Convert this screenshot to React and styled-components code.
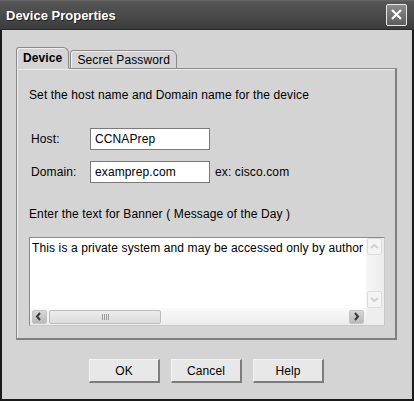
import React from 'react'
import styled, { createGlobalStyle } from 'styled-components'

const GlobalStyle = createGlobalStyle`
  html, body {
    margin: 0;
    padding: 0;
    background: #d4d4d4;
  }
  body {
    font-family: 'Liberation Sans', Arial, sans-serif;
    font-size: 12px;
    letter-spacing: 0.12px;
    color: #000;
  }
`

const Window = styled.div`
  width: 414px;
  height: 401px;
  box-sizing: border-box;
  display: flex;
  flex-direction: column;
  background: #d4d4d4;
  border-left: 2px solid #1a1a1a;
  border-right: 2px solid #1a1a1a;
  border-bottom: 2px solid #1a1a1a;
`

const TitleBar = styled.div`
  height: 29px;
  margin: 0 -2px;
  display: flex;
  align-items: center;
  justify-content: space-between;
  padding: 0 6px 0 6px;
  background: linear-gradient(to bottom, #6a6a6a 0, #555 2px, #4a4a4a 50%, #3c3c3c 100%);
  border-bottom: 1px solid #2a2a2a;
`

const Title = styled.div`
  color: #fff;
  font-weight: 700;
  font-size: 13px;
  letter-spacing: 0;
  text-shadow: 1px 1px 0 #222;
  padding-top: 1px;
`

const CloseButton = styled.div`
  width: 19px;
  height: 20px;
  margin-right: 1px;
  border: 1px solid #e8e8e8;
  border-radius: 2px;
  background: linear-gradient(to bottom, #8a8a8a, #5e5e5e);
  display: flex;
  align-items: center;
  justify-content: center;
`

const Content = styled.div`
  flex: 1;
  display: flex;
  flex-direction: column;
  padding: 17px 15px 0 14px;
`

const TabRow = styled.div`
  display: flex;
  align-items: flex-end;
  height: 22px;
  position: relative;
  z-index: 1;
  margin-bottom: -1px;
`

const Tab = styled.div`
  box-sizing: border-box;
  height: ${(p) => (p.$active ? '22px' : '19px')};
  padding: 0 ${(p) => (p.$active ? '6px' : '6px')};
  display: flex;
  align-items: center;
  font-weight: ${(p) => (p.$active ? 700 : 400)};
  background: #d4d4d4;
  border: 1px solid #8a8a8a;
  border-bottom: ${(p) => (p.$active ? '1px solid #d4d4d4' : '1px solid #8a8a8a')};
  border-top-left-radius: 3px;
  border-top-right-radius: 6px;
  box-shadow: inset 1px 1px 0 #efefef;
  margin-right: 1px;
`

const Panel = styled.div`
  box-sizing: border-box;
  height: 272px;
  border: 1px solid #8a8a8a;
  border-right: 2px solid #808080;
  border-bottom: 2px solid #808080;
  box-shadow: inset 1px 1px 0 #ececec;
  padding: 19px 11px 0 12px;
  display: flex;
  flex-direction: column;
`

const Intro = styled.div`
  height: 14px;
  line-height: 14px;
  margin-bottom: 26px;
`

const FieldRow = styled.div`
  display: flex;
  align-items: center;
  height: 22px;
  margin-bottom: 11px;
`

const Label = styled.div`
  width: 59px;
  padding-left: 2px;
`

const Input = styled.div`
  box-sizing: border-box;
  width: 120px;
  height: 22px;
  background: #fff;
  border: 1px solid #7a7a7a;
  padding: 0 4px;
  display: flex;
  align-items: center;
`

const Hint = styled.div`
  margin-left: 5px;
`

const BannerLabel = styled.div`
  height: 14px;
  line-height: 14px;
  margin-top: 13px;
  margin-bottom: 16px;
`

const TextBox = styled.div`
  box-sizing: border-box;
  width: 356px;
  height: 89px;
  background: #fff;
  border: 1px solid #8a8a8a;
  border-right-color: #c8c8c8;
  border-bottom-color: #c8c8c8;
  display: grid;
  grid-template-columns: 1fr 18px;
  grid-template-rows: 1fr 17px;
  overflow: hidden;
`

const TextArea = styled.div`
  padding: 3px 2px 0 2px;
  white-space: nowrap;
  overflow: hidden;
`

const VScroll = styled.div`
  display: flex;
  flex-direction: column;
  justify-content: space-between;
  background: linear-gradient(to right, #f6f6f6, #ececec);
  padding: 0 2px 0 1px;
`

const HScroll = styled.div`
  display: flex;
  align-items: center;
  background: linear-gradient(to bottom, #fafafa, #ececec);
  padding: 0 2px 0 2px;
  gap: 2px;
`

const Corner = styled.div`
  background: #eeeeee;
`

const ScrollButton = styled.div`
  box-sizing: border-box;
  width: 15px;
  height: ${(p) => (p.$tall ? '17px' : '14px')};
  border: 1px solid ${(p) => (p.$disabled ? '#dcdcdc' : '#c4c4c4')};
  border-radius: 2px;
  background: ${(p) => (p.$disabled ? '#f4f4f4' : 'linear-gradient(to bottom, #d6d6d6, #b8b8b8)')};
  display: flex;
  align-items: center;
  justify-content: center;
`

const Track = styled.div`
  flex: 1;
  height: 14px;
  display: flex;
  align-items: center;
`

const Thumb = styled.div`
  box-sizing: border-box;
  width: 112px;
  height: 14px;
  border: 1px solid #bdbdbd;
  border-radius: 2px;
  background: linear-gradient(to bottom, #ececec, #dcdcdc);
  display: flex;
  align-items: center;
  justify-content: center;
  gap: 1px;
`

const Grip = styled.span`
  width: 1px;
  height: 6px;
  background: #9a9a9a;
`

const ButtonRow = styled.div`
  display: flex;
  justify-content: center;
  gap: 11px;
  margin-top: 19px;
`

const Button = styled.div`
  box-sizing: border-box;
  width: 71px;
  height: 24px;
  display: flex;
  align-items: center;
  justify-content: center;
  background: #e8e8e8;
  border: 1px solid #f4f4f4;
  border-right: 2px solid #7c7c7c;
  border-bottom: 2px solid #7c7c7c;
  font-size: 12px;
`

const Chevron = ({ dir, color }) => {
  const pts = {
    left: '6,2 3,5.5 6,9',
    right: '4,2 7,5.5 4,9',
    up: '2,7 5.5,4 9,7',
    down: '2,4 5.5,7 9,4',
  }[dir]
  return (
    <svg width='11' height='11' viewBox='0 0 11 11'>
      <polyline points={pts} fill='none' stroke={color} strokeWidth='2' />
    </svg>
  )
}

export default function App() {
  return (
    <>
      <GlobalStyle />
      <Window>
        <TitleBar>
          <Title>Device Properties</Title>
          <CloseButton>
            <svg width='13' height='13' viewBox='0 0 13 13'>
              <path d='M2 2 L11 11 M11 2 L2 11' stroke='#fff' strokeWidth='2.2' />
            </svg>
          </CloseButton>
        </TitleBar>
        <Content>
          <TabRow>
            <Tab $active>Device</Tab>
            <Tab>Secret Password</Tab>
          </TabRow>
          <Panel>
            <Intro>Set the host name and Domain name for the device</Intro>
            <FieldRow>
              <Label>Host:</Label>
              <Input>CCNAPrep</Input>
            </FieldRow>
            <FieldRow>
              <Label>Domain:</Label>
              <Input>examprep.com</Input>
              <Hint>ex: cisco.com</Hint>
            </FieldRow>
            <BannerLabel>Enter the text for Banner ( Message of the Day )</BannerLabel>
            <TextBox>
              <TextArea>This is a private system and may be accessed only by author</TextArea>
              <VScroll>
                <ScrollButton $disabled $tall>
                  <Chevron dir='up' color='#cfcfcf' />
                </ScrollButton>
                <ScrollButton $disabled $tall>
                  <Chevron dir='down' color='#cfcfcf' />
                </ScrollButton>
              </VScroll>
              <HScroll>
                <ScrollButton>
                  <Chevron dir='left' color='#3a3a3a' />
                </ScrollButton>
                <Track>
                  <Thumb>
                    <Grip />
                    <Grip />
                    <Grip />
                    <Grip />
                  </Thumb>
                </Track>
                <ScrollButton>
                  <Chevron dir='right' color='#3a3a3a' />
                </ScrollButton>
              </HScroll>
              <Corner />
            </TextBox>
          </Panel>
          <ButtonRow>
            <Button>OK</Button>
            <Button>Cancel</Button>
            <Button>Help</Button>
          </ButtonRow>
        </Content>
      </Window>
    </>
  )
}
